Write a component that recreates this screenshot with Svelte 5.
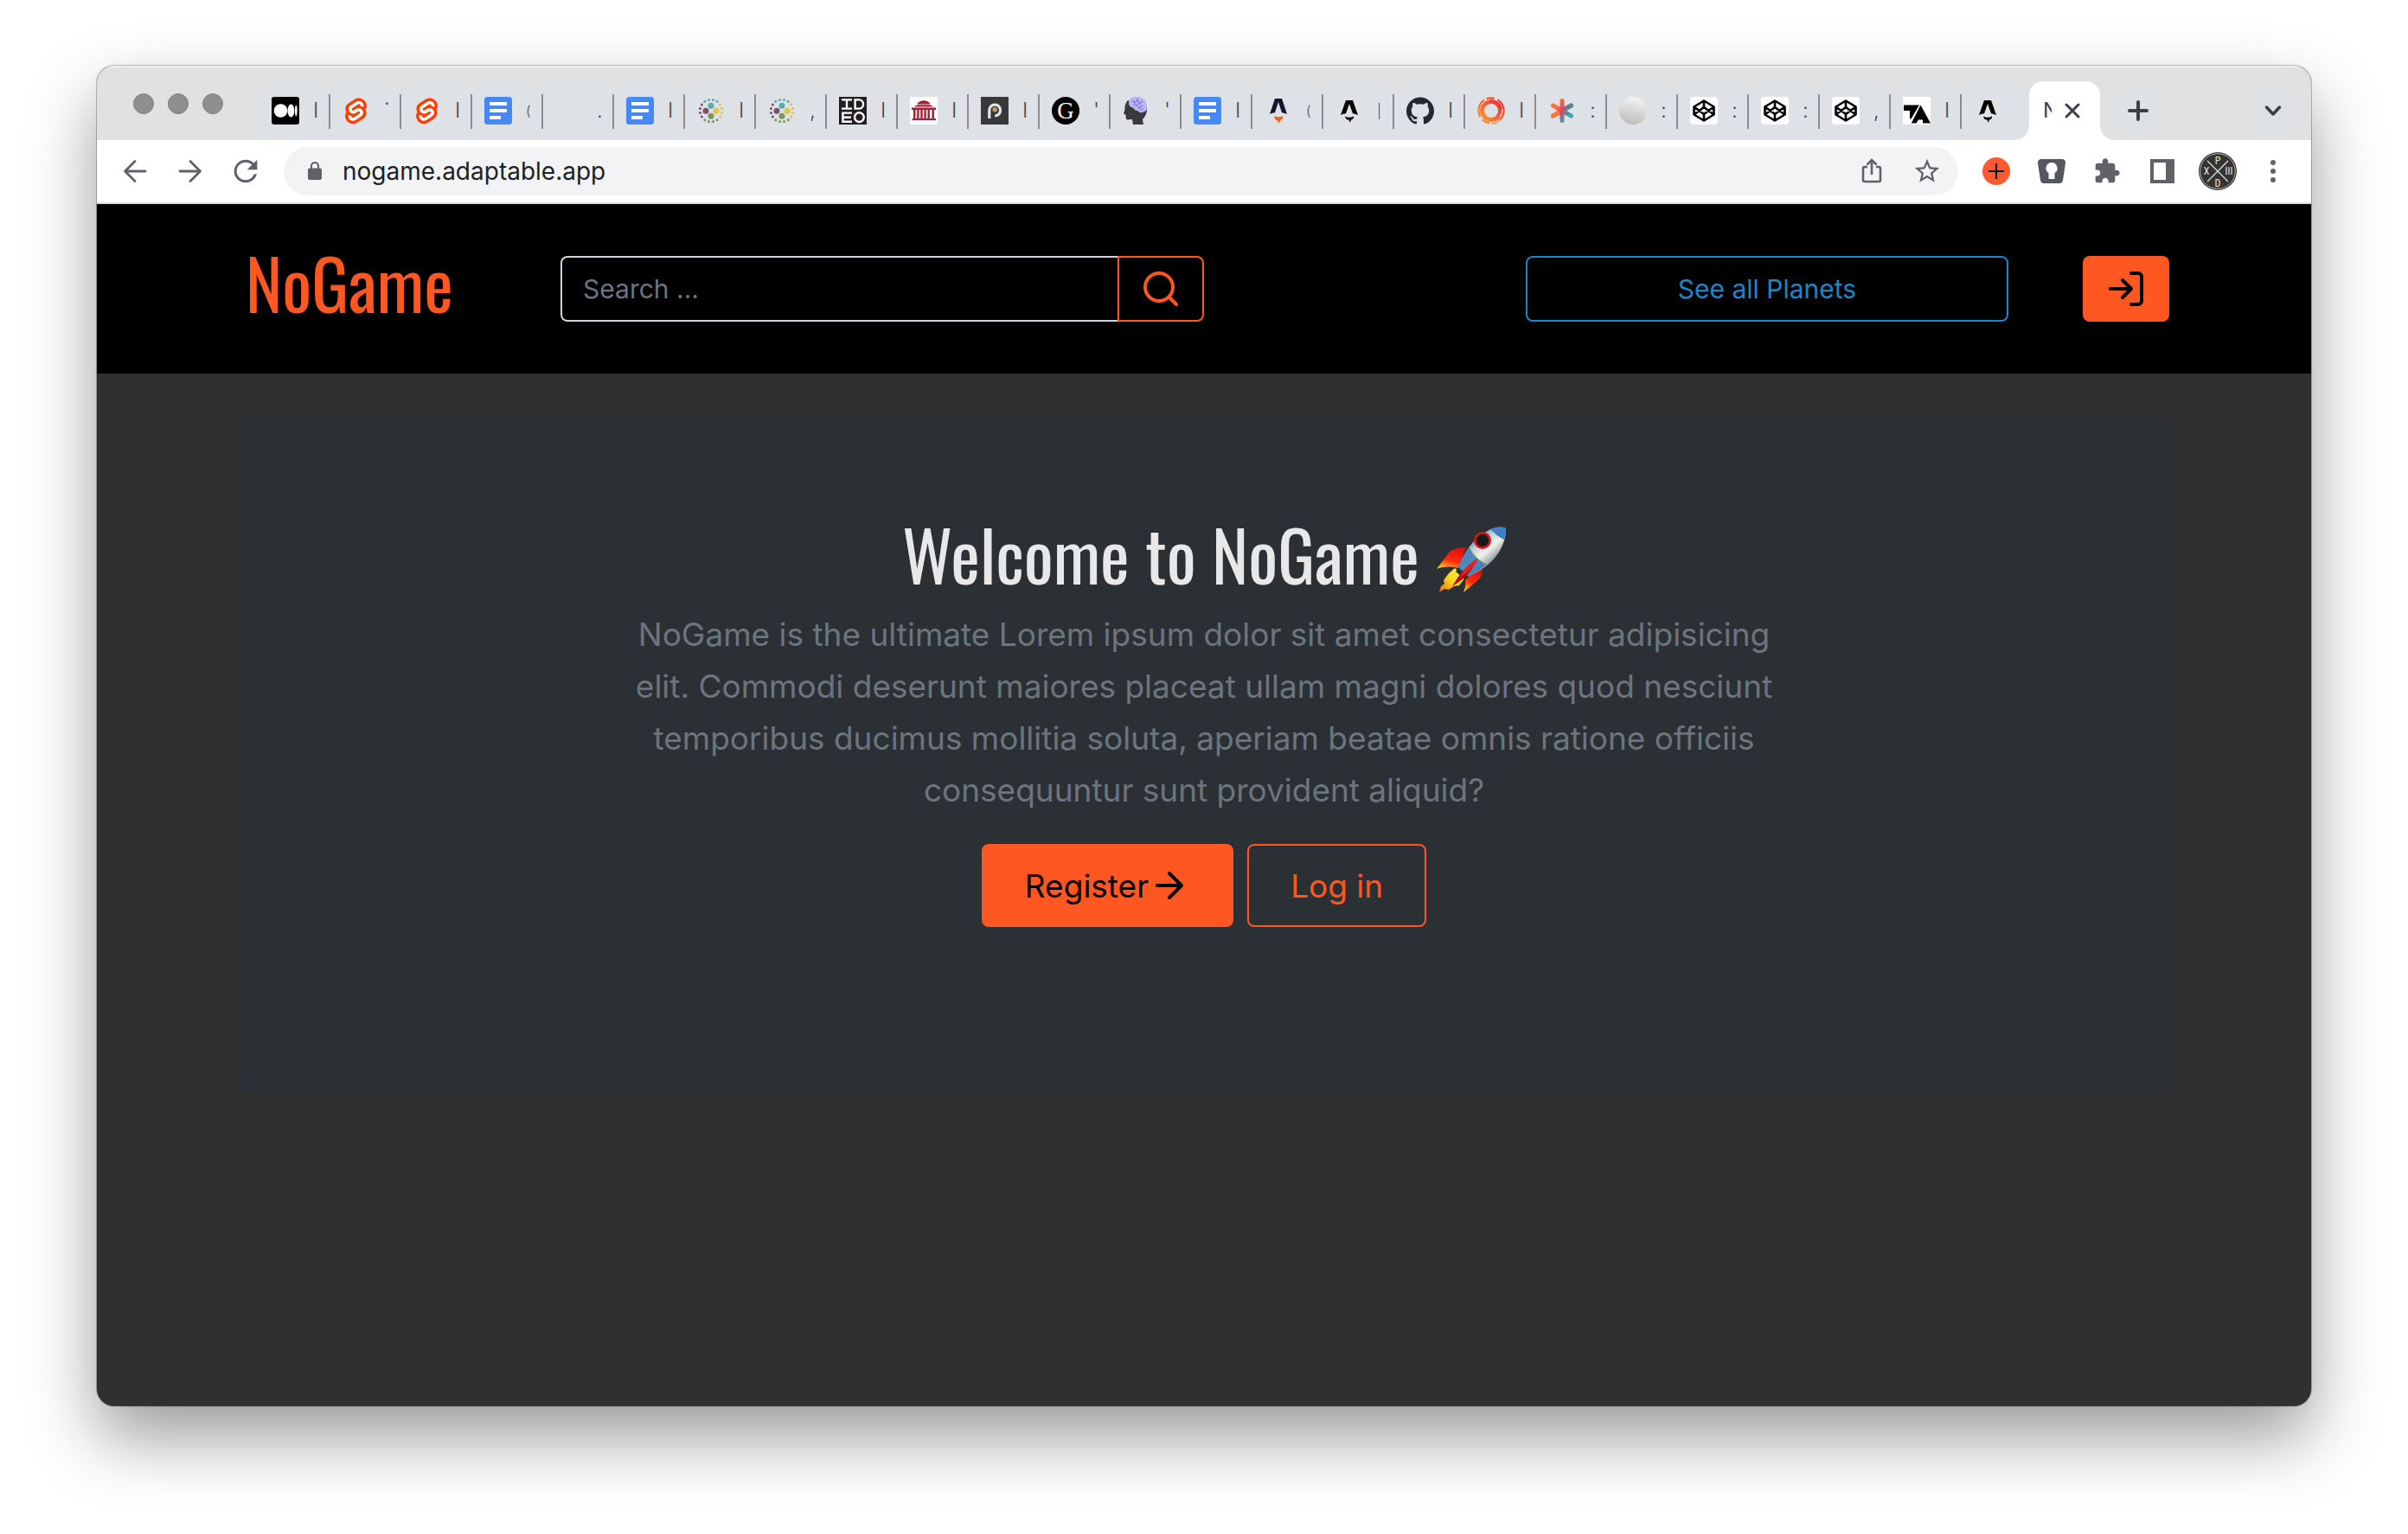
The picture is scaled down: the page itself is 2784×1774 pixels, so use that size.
<script>
  const sveltePath = 'M10.354 21.125a4.44 4.44 0 0 1-4.765-1.767 4.109 4.109 0 0 1-.703-3.107 3.898 3.898 0 0 1 .134-.522l.105-.321.287.21a7.21 7.21 0 0 0 2.186 1.092l.208.063-.02.208a1.253 1.253 0 0 0 .226.83 1.337 1.337 0 0 0 1.435.533 1.231 1.231 0 0 0 .343-.15l5.59-3.562a1.164 1.164 0 0 0 .524-.778 1.242 1.242 0 0 0-.211-.937 1.338 1.338 0 0 0-1.435-.533 1.23 1.23 0 0 0-.343.15l-2.133 1.36a4.078 4.078 0 0 1-1.135.499 4.44 4.44 0 0 1-4.765-1.766 4.108 4.108 0 0 1-.702-3.108 3.855 3.855 0 0 1 1.742-2.582l5.589-3.563a4.072 4.072 0 0 1 1.135-.499 4.44 4.44 0 0 1 4.765 1.767 4.109 4.109 0 0 1 .703 3.107 3.943 3.943 0 0 1-.134.522l-.105.321-.286-.21a7.204 7.204 0 0 0-2.187-1.093l-.208-.063.02-.207a1.255 1.255 0 0 0-.226-.831 1.337 1.337 0 0 0-1.435-.532 1.231 1.231 0 0 0-.343.15L8.62 9.368a1.162 1.162 0 0 0-.524.778 1.24 1.24 0 0 0 .211.937 1.338 1.338 0 0 0 1.435.533 1.235 1.235 0 0 0 .344-.151l2.132-1.36a4.067 4.067 0 0 1 1.135-.498 4.44 4.44 0 0 1 4.765 1.766 4.108 4.108 0 0 1 .702 3.108 3.857 3.857 0 0 1-1.742 2.583l-5.589 3.562a4.072 4.072 0 0 1-1.135.499m10.358-17.95C18.484-.015 14.082-.96 10.9 1.068L5.31 4.63a6.412 6.412 0 0 0-2.896 4.295 6.753 6.753 0 0 0 .666 4.336 6.43 6.43 0 0 0-.96 2.396 6.833 6.833 0 0 0 1.168 5.167c2.229 3.19 6.63 4.135 9.812 2.108l5.59-3.562a6.41 6.41 0 0 0 2.896-4.295 6.756 6.756 0 0 0-.665-4.336 6.429 6.429 0 0 0 .958-2.396 6.831 6.831 0 0 0-1.167-5.168Z';
  const githubPath = 'M12 .297c-6.63 0-12 5.373-12 12 0 5.303 3.438 9.8 8.205 11.385.6.113.82-.258.82-.577 0-.285-.01-1.04-.015-2.04-3.338.724-4.042-1.61-4.042-1.61C4.422 18.07 3.633 17.7 3.633 17.7c-1.087-.744.084-.729.084-.729 1.205.084 1.838 1.236 1.838 1.236 1.07 1.835 2.809 1.305 3.495.998.108-.776.417-1.305.76-1.605-2.665-.3-5.466-1.332-5.466-5.93 0-1.31.465-2.38 1.235-3.22-.135-.303-.54-1.523.105-3.176 0 0 1.005-.322 3.3 1.23.96-.267 1.98-.399 3-.405 1.02.006 2.04.138 3 .405 2.28-1.552 3.285-1.23 3.285-1.23.645 1.653.24 2.873.12 3.176.765.84 1.23 1.91 1.23 3.22 0 4.61-2.805 5.625-5.475 5.92.42.36.81 1.096.81 2.22 0 1.606-.015 2.896-.015 3.286 0 .315.21.69.825.57C20.565 22.092 24 17.592 24 12.297c0-6.627-5.373-12-12-12';

  const tabs = [
    { icon: 'medium', title: 'I' },
    { icon: 'svelte', title: '·', high: true },
    { icon: 'svelte', title: 'I' },
    { icon: 'docs', title: '(', small: true },
    { icon: 'blank', title: '.' },
    { icon: 'docs', title: 'I' },
    { icon: 'dots', title: 'I' },
    { icon: 'dots', title: ',' },
    { icon: 'ideo', title: 'I' },
    { icon: 'building', title: 'I' },
    { icon: 'pin', title: 'I' },
    { icon: 'letter', title: "'" },
    { icon: 'brain', title: "'" },
    { icon: 'docs', title: 'I' },
    { icon: 'astro', title: '(', small: true },
    { icon: 'astroDark', title: '|', small: true },
    { icon: 'github', title: 'I' },
    { icon: 'swirl', title: 'I' },
    { icon: 'asterisk', title: ':' },
    { icon: 'sphere', title: ':' },
    { icon: 'codepen', title: ':' },
    { icon: 'codepen', title: ':' },
    { icon: 'codepen', title: ',' },
    { icon: 'ta', title: 'I' },
    { icon: 'astroDark', title: '' }
  ];

  // Ring of sixteen small dots, coloured by quadrant.
  const ring = Array.from({ length: 16 }, (_, i) => {
    const a = ((i + 0.5) * Math.PI) / 8 - Math.PI;
    const colours = ['#7d5068', '#56abb0', '#e2c63c', '#78965c'];
    return {
      x: 16 + 12.8 * Math.cos(a),
      y: 16 + 12.8 * Math.sin(a),
      fill: colours[Math.floor(((i + 2) % 16) / 4)]
    };
  });

  let address = $state('nogame.adaptable.app');
  let query = $state('');
</script>

{#snippet favicon(name)}
  <svg class="favicon" viewBox="0 0 32 32" aria-hidden="true">
    {#if name === 'medium'}
      <rect width="32" height="32" rx="3" fill="#000" />
      <circle cx="10.5" cy="16" r="7.8" fill="#fff" />
      <ellipse cx="22.4" cy="16" rx="3.9" ry="7.4" fill="#fff" />
      <ellipse cx="28.3" cy="16" rx="1.3" ry="6.5" fill="#fff" />
    {:else if name === 'svelte'}
      <g transform="translate(0.6 1.4) scale(1.24)">
        <path d="M4 8 10 3 17 2 20 7 19 14 13 21 6 22 4 16Z" fill="#fff" />
        <path d={sveltePath} fill="#ff3e00" />
      </g>
    {:else if name === 'docs'}
      <rect width="32" height="32" rx="3.5" fill="#4688f4" />
      <path d="M6 6h20v4H6zM6 14h20v4H6zM6 22h13v4H6z" fill="#fff" />
    {:else if name === 'dots'}
      {#each ring as dot}
        <circle cx={dot.x} cy={dot.y} r="1.5" fill={dot.fill} />
      {/each}
      <circle cx="16" cy="10.2" r="3.5" fill="#56abb0" />
      <circle cx="10" cy="16.2" r="3.5" fill="#7d5068" />
      <circle cx="22" cy="16.2" r="3.5" fill="#e2c63c" />
      <circle cx="16" cy="22.2" r="3.5" fill="#78965c" />
    {:else if name === 'ideo'}
      <rect width="32" height="32" fill="#231f20" />
      <g fill="none" stroke="#fff" stroke-width="2.4">
        <path d="M3 3.4h12M9 3.4v10M3 13.6h12M18.6 3.4h4.4a5 5 0 0 1 0 10.2h-4.4zM15 18.6H4.4v10.2H15M4.4 23.7H14" />
        <circle cx="23.4" cy="23.6" r="5.4" />
      </g>
    {:else if name === 'building'}
      <rect width="32" height="32" fill="#fff" />
      <g fill="#a32035">
        <path d="M8 8.5C10 5.5 13 4.3 16 4.3s6 1.2 8 4.2zM5 11.5C7 9.5 9 9.2 11 9.2h10c2 0 4 .3 6 2.3zM2 12.5h28V15H2zM3.500 25h25v2H2zM28 25h2v2h-2z" />
        <path d="M4 15h2.500v10H4zM8.200 15h2.400v10H8.200zM12.300 15h2.400v10h-2.400zM16.400 15h2.400v10h-2.400zM20.500 15h2.400v10h-2.400zM25.500 15h2.500v10h-2.500z" />
      </g>
    {:else if name === 'pin'}
      <rect width="32" height="32" fill="#363839" />
      <path d="M9.8 25V15.500a6.400 6.400 0 1 1 6.400 6.400" fill="none" stroke="#e3e3e1" stroke-width="3.2" />
      <circle cx="16.2" cy="14.8" r="2.8" fill="#c39a56" />
    {:else if name === 'letter'}
      <circle cx="16" cy="16" r="16" fill="#000" />
      <text class="serif-mark" x="16" y="25" text-anchor="middle" fill="#fff">G</text>
    {:else if name === 'brain'}
      <path d="M6 4C3 7 2 12 2.500 15L1 19l2.500 2L4 26c2 1 5 0 7 0l1 6h12l-1-6c4-4 5-8 5-12z" fill="#3a3a3c" />
      <path d="M8 2.500C13-1 21-1 25 3c3.500 3 4 9 2 13-3 2-6 4-10 0-4 0-4-4-7-4-3-1-4-6-2-9.500z" fill="#b7b5f6" />
      <path d="M11 4l3 3 3-4 2 5 4-3M12 10l4-1 3 4 4-3M20 15l4-1" fill="none" stroke="#7a75e6" stroke-width="1.200" />
    {:else if name === 'astro'}
      <path d="M12 2h8l6 18c-3-1-4.500-1.500-6-1.700L16 6l-4 12.300C10 18.500 8 19 6 20z" fill="#13172b" />
      <path d="M11.500 22c3 1.800 6.500 1.800 9.500 0 .7 3-1 5-3 5.500L16.500 31l-1.500-3.500c-2.500-.5-4-2.500-3.500-5.500z" fill="#ff5d1c" />
    {:else if name === 'astroDark'}
      <path d="M12 4h8l6 17c-3-1-4.500-1.500-6-1.700L16 8l-4 11.300C10 19.500 8 20 6 21z" fill="#000" />
      <path d="M11 22.500c3 1.800 7 1.800 10 0 .3 2.500-1 3.500-3 4L16.800 30l-1.300-3.500c-2.500.5-4-1.500-4.500-4z" fill="#000" />
    {:else if name === 'github'}
      <path transform="scale(1.333)" d={githubPath} fill="#24292f" />
    {:else if name === 'swirl'}
      <defs>
        <linearGradient id="swirl-fill" x1="0" y1="1" x2="1" y2="0">
          <stop offset="0" stop-color="#f79a32" /><stop offset="1" stop-color="#ef2b38" />
        </linearGradient>
      </defs>
      <g fill="none" stroke="url(#swirl-fill)">
        <circle cx="16" cy="16" r="10.500" stroke-width="5" />
        <circle cx="16" cy="16" r="14.600" stroke-width="2.200" stroke-dasharray="22 3 9 4" />
      </g>
      <path d="M5 9a13 13 0 0 1 9-6M26 27a14 14 0 0 1-9 3M29 14a13 13 0 0 1-3 9" fill="none" stroke="#fbe3d8" />
    {:else if name === 'asterisk'}
      <defs>
        <linearGradient id="asterisk-fill" gradientUnits="userSpaceOnUse" x1="4" y1="8" x2="28" y2="24">
          <stop offset="0.2" stop-color="#f9743a" /><stop offset="0.5" stop-color="#d94465" /><stop offset="0.8" stop-color="#36a7b3" />
        </linearGradient>
      </defs>
      <path d="M16 4.500v23M5.500 10l21 12M26.500 10l-21 12" fill="none" stroke="url(#asterisk-fill)" stroke-width="5" stroke-linecap="round" />
      <path d="M26.500 10l-5 2.900" stroke="#5c8494" stroke-width="5" stroke-linecap="round" />
      <path d="M5.500 22l5-2.900" stroke="#f77b39" stroke-width="5" stroke-linecap="round" />
    {:else if name === 'sphere'}
      <defs>
        <linearGradient id="sphere-fill" x1="0.6" y1="0" x2="0.4" y2="1">
          <stop offset="0" stop-color="#f4f4f4" /><stop offset="1" stop-color="#bdbcba" />
        </linearGradient>
      </defs>
      <circle cx="16" cy="16" r="16" fill="url(#sphere-fill)" />
    {:else if name === 'codepen'}
      <rect width="32" height="32" rx="4" fill="#fff" />
      <path d="M16 4.500 27.500 11.500v9L16 27.500 4.500 20.500v-9zM16 4.500v7.500M16 20v7.500M4.500 11.500 16 20l11.500-8.500M4.500 20.500 16 12l11.500 8.500" fill="none" stroke="#000" stroke-width="2.600" stroke-linejoin="round" />
    {:else if name === 'ta'}
      <rect width="32" height="32" fill="#fff" />
      <path d="M1 10h18l-9.500 16H8V16.500H1zM20.500 10 32 31h-9v-4h-5l-2.500 4H9.800z" transform="translate(0 -0.500)" fill="#000" />
    {/if}
  </svg>
{/snippet}

<div class="desktop">
  <div class="window">
    <div class="titlebar">
      <div class="lights"><i></i><i></i><i></i></div>
      <div class="tabs">
        {#each tabs as tab, i}
          <button class="tab" class:first={i === 0} aria-label="Tab {i + 1}">
            {@render favicon(tab.icon)}
            <span class="tab-title" class:small={tab.small} class:high={tab.high}>{tab.title}</span>
          </button>
        {/each}
        <div class="tab-active">
          <span class="tab-title">N</span>
          <button class="tab-close" aria-label="Close tab">
            <svg width="20" height="20" viewBox="0 0 20 20"><path d="M3 3l14 14M17 3 3 17" stroke="#3c4043" stroke-width="3" stroke-linecap="round" /></svg>
          </button>
        </div>
        <button class="round" aria-label="New tab">
          <svg width="24" height="24" viewBox="0 0 24 24"><path d="M12 2v20M2 12h20" stroke="#3c4043" stroke-width="4" stroke-linecap="round" /></svg>
        </button>
      </div>
      <button class="round" aria-label="Search tabs">
        <svg width="20" height="20" viewBox="0 0 20 20"><path d="M2.500 6 10 14l7.500-8" fill="none" stroke="#3c4043" stroke-width="3.500" stroke-linecap="round" stroke-linejoin="round" /></svg>
      </button>
    </div>

    <div class="toolbar">
      <button class="tool" aria-label="Back">
        <svg width="28" height="28" viewBox="0 0 28 28"><path d="M26 14H3M14 2.500 2.500 14 14 25.500" fill="none" stroke="#5f6368" stroke-width="2.800" stroke-linecap="round" stroke-linejoin="round" /></svg>
      </button>
      <button class="tool" aria-label="Forward">
        <svg width="28" height="28" viewBox="0 0 28 28"><path d="M2 14h23M14 2.500 25.500 14 14 25.500" fill="none" stroke="#5f6368" stroke-width="2.800" stroke-linecap="round" stroke-linejoin="round" /></svg>
      </button>
      <button class="tool" aria-label="Reload">
        <svg width="40" height="40" viewBox="0 0 24 24"><path fill="#5f6368" d="M17.650 6.350C16.200 4.900 14.210 4 12 4c-4.420 0-7.990 3.580-7.990 8s3.570 8 7.990 8c3.730 0 6.840-2.550 7.730-6h-1.900c-.82 2.330-3.200 4.200-5.830 4.200-3.420 0-6.200-2.780-6.200-6.200s2.780-6.200 6.200-6.200c1.700 0 3.240.700 4.350 1.850L13 11h7V4z" /></svg>
      </button>
      <div class="omnibox">
        <svg width="24" height="24" viewBox="0 0 24 24"><path fill="#5f6368" d="M18 8.500h-1V6c0-2.760-2.240-5-5-5S7 3.240 7 6v2.500H6c-1.100 0-2 .9-2 2V20c0 1.100.9 2 2 2h12c1.100 0 2-.9 2-2v-9.500c0-1.100-.9-2-2-2zm-3 0H9V6c0-1.710 1.300-3 3-3s3 1.290 3 3z" /></svg>
        <input class="address" aria-label="Address" bind:value={address} />
        <button class="tool" aria-label="Share">
          <svg width="32" height="32" viewBox="0 0 32 32"><path d="M11 11H8a2 2 0 0 0-2 2v13a2 2 0 0 0 2 2h16a2 2 0 0 0 2-2V13a2 2 0 0 0-2-2h-3M16 20V3M10.500 8.500 16 3l5.500 5.500" fill="none" stroke="#5f6368" stroke-width="2.600" /></svg>
        </button>
        <button class="tool" aria-label="Bookmark">
          <svg width="34" height="34" viewBox="0 0 24 24"><path fill="#5f6368" d="M22 9.240l-7.190-.62L12 2 9.190 8.630 2 9.240l5.460 4.730L5.820 21 12 17.270 18.180 21l-1.630-7.030L22 9.240zM12 15.400l-3.760 2.270 1-4.280-3.320-2.880 4.380-.38L12 6.100l1.710 4.040 4.380.38-3.320 2.880 1 4.280L12 15.400z" /></svg>
        </button>
      </div>
      <button class="tool" aria-label="Add">
        <svg width="32" height="32" viewBox="0 0 32 32"><circle cx="16" cy="16" r="16" fill="#ff5a30" /><path d="M16 7v18M7 16h18" stroke="#000" stroke-width="2" /></svg>
      </button>
      <button class="tool" aria-label="Passwords">
        <svg width="32" height="32" viewBox="0 0 32 32"><path fill="#54585e" d="M4 2h24a4 4 0 0 1 4 4.500l-3 20a4.500 4.500 0 0 1-4 3.500H7a4.500 4.500 0 0 1-4-3.500L0 6.500A4 4 0 0 1 4 2z" /><path fill="#fff" d="M16 6a6.500 6.500 0 0 1 3.500 12v7h-7v-7A6.500 6.500 0 0 1 16 6z" /></svg>
      </button>
      <button class="tool" aria-label="Extensions">
        <svg width="32" height="32" viewBox="0 0 24 24"><path fill="#5f6368" d="M20.500 11H19V7c0-1.100-.9-2-2-2h-4V3.500C13 2.120 11.880 1 10.500 1S8 2.120 8 3.500V5H4c-1.100 0-1.990.9-1.990 2v3.800H3.500c1.490 0 2.700 1.210 2.700 2.700s-1.210 2.700-2.700 2.700H2V20c0 1.100.9 2 2 2h3.800v-1.500c0-1.490 1.210-2.700 2.700-2.700 1.490 0 2.700 1.210 2.700 2.700V22H17c1.100 0 2-.9 2-2v-4h1.500c1.380 0 2.500-1.120 2.500-2.500S21.880 11 20.500 11z" /></svg>
      </button>
      <button class="tool" aria-label="Side panel">
        <svg width="28" height="28" viewBox="0 0 28 28"><path fill="#5f6368" fill-rule="evenodd" d="M0 0h28v28H0zM4 4v20h14V4z" /></svg>
      </button>
      <button class="tool" aria-label="Profile">
        <svg class="avatar" width="44" height="44" viewBox="0 0 44 44">
          <circle cx="22" cy="22" r="22" fill="#333" />
          <circle cx="22" cy="22" r="20.300" fill="none" stroke="#b5b5b5" />
          <path d="M10 10l24 24M34 10 10 34" stroke="#ddd" stroke-width="1.300" />
          <g fill="#e5e5e5" text-anchor="middle">
            <text x="22" y="14">P</text><text x="9" y="26">X</text><text x="35" y="26">III</text><text x="22" y="40">D</text>
          </g>
        </svg>
      </button>
      <button class="tool" aria-label="Menu">
        <svg width="8" height="28" viewBox="0 0 8 28"><g fill="#5f6368"><circle cx="4" cy="4" r="3" /><circle cx="4" cy="14" r="3" /><circle cx="4" cy="24" r="3" /></g></svg>
      </button>
    </div>

    <div class="page">
      <header>
        <a class="brand" href="#home">NoGame</a>
        <form class="search" onsubmit={(e) => e.preventDefault()}>
          <input aria-label="Search" placeholder="Search ..." bind:value={query} />
          <button aria-label="Search">
            <svg class="line-icon" viewBox="0 0 24 24"><circle cx="11" cy="11" r="8" /><path d="m21 21-4.350-4.350" /></svg>
          </button>
        </form>
        <a class="planets" href="#planets">See all Planets</a>
        <a class="signin" href="#login" aria-label="Log in">
          <svg class="line-icon" viewBox="0 0 24 24"><path d="M15 3h4a2 2 0 0 1 2 2v14a2 2 0 0 1-2 2h-4M10 17l5-5-5-5M15 12H3" /></svg>
        </a>
      </header>

      <main>
        <h1>
          Welcome to NoGame
          <svg class="rocket" viewBox="0 0 80 76" role="img" aria-label="rocket">
            <defs>
              <linearGradient id="hull" x1="0.2" y1="0.2" x2="0.7" y2="0.8">
                <stop offset="0" stop-color="#3b76b4" /><stop offset="0.35" stop-color="#c4d2da" /><stop offset="0.6" stop-color="#f3f3ee" /><stop offset="1" stop-color="#6d7b82" />
              </linearGradient>
              <linearGradient id="fin" x1="0.7" y1="0" x2="0.3" y2="1">
                <stop offset="0" stop-color="#d30f0a" /><stop offset="0.6" stop-color="#ff2a10" /><stop offset="1" stop-color="#ffc21a" />
              </linearGradient>
              <linearGradient id="flame" x1="1" y1="0" x2="0" y2="1">
                <stop offset="0" stop-color="#ffe95a" /><stop offset="0.5" stop-color="#ffd91f" /><stop offset="1" stop-color="#f46a12" />
              </linearGradient>
            </defs>
            <path d="M21 48 14 54 8 62 9 66 5 69 3 76 9 72 14 73 20 69 26 68 33 59z" fill="url(#flame)" />
            <path d="M34 24C26 24 20 25 15 29L0 49c8-3 16-3 25-1z" fill="url(#fin)" />
            <path d="M52 46c1 7 0 11-3 15L31 76c3-8 3-12 1-18z" fill="url(#fin)" />
            <path d="M80 2C71-2 58 4 49 11 38 21 29 34 25 49l11 9c14-6 27-15 35-27 6-9 9-19 9-29z" fill="url(#hull)" />
            <path d="M80 2C75-1 68 0 62 3c5 5 11 10 16 12 2-4 2-9 2-13z" fill="#3d82c4" />
            <path d="M38 24c3 8 12 17 20 19C51 50 44 54 36 58l-11-9c2-9 7-18 13-25z" fill="#3a77b4" opacity="0.85" />
            <path d="M38 24c5 9 12 16 20 19" fill="none" stroke="#d9c14a" />
            <circle cx="53" cy="16" r="10" fill="#d8121a" />
            <circle cx="53" cy="16" r="7.200" fill="#17191d" />
            <path d="M25 47l-3 5 11 10 4-4z" fill="#27323c" />
            <path d="M47 37C36 44 26 55 18 69c10-6 21-15 25-24 2-3 4-5 4-8z" fill="#b80d10" />
            <path d="M47 37C38 43 31 51 27 58c8-5 18-12 20-21z" fill="#ee2018" />
          </svg>
        </h1>
        <p>
          NoGame is the ultimate Lorem ipsum dolor sit amet consectetur adipisicing elit. Commodi deserunt
          maiores placeat ullam magni dolores quod nesciunt temporibus ducimus mollitia soluta, aperiam beatae
          omnis ratione officiis consequuntur sunt provident aliquid?
        </p>
        <div class="actions">
          <a class="btn solid" href="#register">Register<svg class="line-icon" viewBox="0 0 24 24"><path d="M5 12h14M12 5l7 7-7 7" /></svg></a>
          <a class="btn outline" href="#login">Log in</a>
        </div>
      </main>
    </div>
  </div>
</div>

<style>
  :global(body) {
    margin: 0;
    background: #fff;
  }
  * {
    box-sizing: border-box;
  }
  button {
    border: 0;
    padding: 0;
    background: none;
    font: inherit;
    cursor: pointer;
  }
  a {
    text-decoration: none;
  }
  .desktop {
    min-height: 100vh;
    display: flex;
    padding: 76px 112px 148px;
    font-family: Inter, 'Liberation Sans', sans-serif;
  }
  .window {
    flex: 1;
    min-width: 0;
    display: flex;
    flex-direction: column;
    border-radius: 20px;
    overflow: hidden;
    background: #303030;
    box-shadow: 0 0 0 1px rgba(0, 0, 0, 0.25), 0 36px 80px rgba(0, 0, 0, 0.4);
  }

  /* tab strip */
  .titlebar {
    display: flex;
    align-items: center;
    height: 86px;
    padding: 18px 16px 0 42px;
    background: #e1e1e1;
    box-shadow: inset 0 2px #f0f0f0;
  }
  .lights {
    display: flex;
    gap: 16px;
    width: 144px;
    padding-bottom: 16px;
  }
  .lights i {
    width: 24px;
    height: 24px;
    border-radius: 50%;
    background: #8f8f8f;
    border: 1px solid #808080;
  }
  .tabs {
    flex: 1;
    min-width: 0;
    display: flex;
    align-items: center;
    height: 68px;
  }
  .tab {
    position: relative;
    display: flex;
    align-items: center;
    gap: 16px;
    width: 82px;
    height: 68px;
    padding-left: 16px;
    background: #dee1e6;
    border-radius: 16px 16px 0 0;
    font-size: 24px;
    color: #45494d;
  }
  .tab:not(.first)::before {
    content: '';
    position: absolute;
    left: 0;
    top: 15px;
    width: 2px;
    height: 40px;
    background: #8b8d92;
  }
  .favicon {
    width: 32px;
    height: 32px;
    flex: none;
  }
  .serif-mark {
    font: 27px 'Liberation Serif', serif;
  }
  .tab-title {
    font-weight: 300;
    line-height: 32px;
  }
  .small {
    font-size: 16px;
  }
  .high {
    padding-bottom: 16px;
  }
  .tab-active {
    position: relative;
    display: flex;
    align-items: center;
    gap: 14px;
    width: 82px;
    height: 68px;
    margin-left: -2px;
    padding-left: 16px;
    background: #fff;
    border-radius: 16px 16px 0 0;
    font-size: 24px;
    color: #3c4043;
  }
  .tab-active .tab-title {
    width: 10px;
    overflow: hidden;
    font-weight: 400;
  }
  .tab-active::before,
  .tab-active::after {
    content: '';
    position: absolute;
    bottom: 0;
    width: 16px;
    height: 16px;
  }
  .tab-active::before {
    right: 100%;
    background: radial-gradient(circle at 0 0, transparent 15px, #fff 16px);
  }
  .tab-active::after {
    left: 100%;
    background: radial-gradient(circle at 100% 0, transparent 15px, #fff 16px);
  }
  .tab-close {
    display: flex;
  }
  .round {
    flex: none;
    display: flex;
    align-items: center;
    justify-content: center;
    width: 56px;
    height: 56px;
    border-radius: 50%;
    background: #dee1e6;
  }
  .tabs .round {
    margin-left: 16px;
  }

  /* toolbar */
  .toolbar {
    display: flex;
    align-items: center;
    height: 74px;
    padding: 0 12px;
    background: #fff;
    border-bottom: 2px solid #dcdcdc;
  }
  .tool {
    flex: none;
    display: flex;
    align-items: center;
    justify-content: center;
    width: 64px;
    height: 56px;
  }
  .omnibox {
    flex: 1;
    min-width: 0;
    display: flex;
    align-items: center;
    height: 56px;
    margin: 0 12px;
    padding: 0 4px 0 24px;
    border-radius: 28px;
    background: #f1f3f4;
  }
  .address {
    flex: 1;
    min-width: 0;
    margin-left: 20px;
    padding: 0;
    border: 0;
    outline: 0;
    background: none;
    font: 28px Inter, sans-serif;
    color: #202124;
  }
  .avatar text {
    font: 12px 'Roboto Condensed', 'Liberation Sans', sans-serif;
  }

  /* site */
  .page {
    flex: 1;
  }
  header {
    display: grid;
    grid-template-columns: 2fr 4fr 2fr 3fr 1fr;
    align-items: center;
    height: 196px;
    padding: 0 164px;
    background: #000;
  }
  .line-icon {
    width: 48px;
    height: 48px;
    fill: none;
    stroke: currentColor;
    stroke-width: 2;
    stroke-linecap: round;
    stroke-linejoin: round;
  }
  .brand,
  h1 {
    font-family: Oswald, 'Roboto Condensed', 'Liberation Sans', sans-serif;
    font-weight: 400;
    font-size: 80px;
    line-height: 96px;
  }
  .brand {
    padding: 0 0 16px 8px;
    color: #ff5722;
  }
  .search {
    display: flex;
  }
  .search input {
    flex: 1;
    min-width: 0;
    height: 76px;
    padding: 0 24px;
    border: 2px solid #ced4da;
    border-right: 0;
    border-radius: 8px 0 0 8px;
    background: transparent;
    font: 30px Inter, sans-serif;
    color: #dee2e6;
  }
  .search input::placeholder {
    color: #6c757d;
    opacity: 1;
  }
  .search button {
    display: flex;
    align-items: center;
    justify-content: center;
    width: 100px;
    height: 76px;
    border: 2px solid #ff5722;
    border-radius: 0 8px 8px 0;
    color: #ff5722;
  }
  .planets {
    grid-column: 4;
    height: 76px;
    border: 2px solid #1c86c9;
    border-radius: 8px;
    color: #1c86c9;
    font-size: 30px;
    line-height: 72px;
    text-align: center;
  }
  .signin {
    justify-self: end;
    display: flex;
    align-items: center;
    justify-content: center;
    width: 100px;
    height: 76px;
    border-radius: 8px;
    background: #ff5722;
    color: #000;
  }
  main {
    margin: 48px 164px 0;
    padding: 112px 0 192px;
    border-radius: 12px;
    background: #2b3035;
    text-align: center;
  }
  h1 {
    display: flex;
    align-items: center;
    justify-content: center;
    gap: 20px;
    margin: 0 0 16px;
    color: #e8e8e8;
  }
  .rocket {
    width: 80px;
    height: 76px;
    margin-top: 14px;
  }
  p {
    width: 60%;
    margin: 0 auto 32px;
    font-size: 37px;
    line-height: 60px;
    color: #6c757d;
  }
  .actions {
    display: flex;
    justify-content: center;
    gap: 16px;
  }
  .btn {
    display: flex;
    align-items: center;
    height: 96px;
    padding: 0 48px;
    border: 2px solid #ff5722;
    border-radius: 8px;
    font-size: 37px;
  }
  .solid {
    background: #ff5722;
    color: #000;
  }
  .outline {
    color: #ff5722;
  }
</style>
